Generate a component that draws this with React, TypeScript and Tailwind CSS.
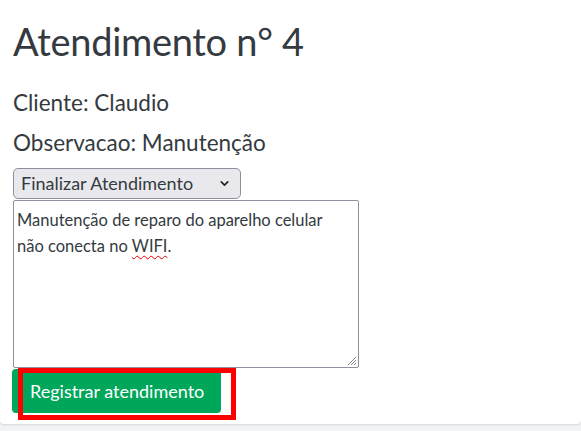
import { ChevronDown } from "lucide-react";

const font = { fontFamily: "Lato, 'Liberation Sans', sans-serif" };

const App = () => {
  return (
    <div className="w-[581px] h-[431px] bg-[#f1f3f6] overflow-hidden" style={font}>
      {/* ============ card ============ */}
      <div className="bg-white rounded-b-[4px] shadow-[0_1px_2px_rgba(0,0,0,0.12)] h-[424px] pl-[13px] pt-[17px] text-[#343a40]">
        <h1 className="text-[38px] leading-[48px] font-normal tracking-[-0.3px]">Atendimento n° 4</h1>
        <p className="mt-[24px] text-[22.5px] leading-[28px]">Cliente: Claudio</p>
        <p className="mt-[12px] text-[22.5px] leading-[28px]">Observacao: Manutenção</p>

        <div className="relative mt-[11px] w-[228px]">
          <select
            className="appearance-none w-full h-[31px] bg-[#e9e9ed] border border-[#8f8f9d] rounded-[5px] pl-[7px] text-[18px] text-[#343a40] outline-none"
            defaultValue="finalizar"
          >
            <option value="finalizar">Finalizar Atendimento</option>
          </select>
          <ChevronDown className="absolute right-[10px] top-[9px] w-[13px] h-[13px] text-[#222]" strokeWidth={3} />
        </div>

        <div className="relative mt-[1px] w-[346px] h-[168px] border border-[#8f8f9d] rounded-[2px] px-[3px] pt-[6px] text-[16.5px] leading-[26px] text-[#343a40]">
          Manutenção de reparo do aparelho celular
          <br />
          não conecta no{" "}
          <span className="underline decoration-wavy decoration-[#e00] decoration-1 underline-offset-[3px]">WIFI</span>.
          <svg className="absolute right-[1px] bottom-[1px]" width="10" height="10" viewBox="0 0 10 10">
            <path d="M9 1L1 9M9 4L4 9M9 7L7 9" stroke="#888" strokeWidth="1" />
          </svg>
        </div>

        <div className="relative mt-[1px] w-[210px]">
          <button className="w-[209px] h-[44px] bg-[#00a65a] text-white rounded-[4px] text-left pl-[18px] text-[18px] ml-[-1px]">
            Registrar atendimento
          </button>
          {/* annotation box */}
          <div className="absolute left-[5px] top-[-1px] w-[218px] h-[52px] border-[5px] border-[#ff0000] pointer-events-none" />
        </div>
      </div>
    </div>
  );
};

export default App;
